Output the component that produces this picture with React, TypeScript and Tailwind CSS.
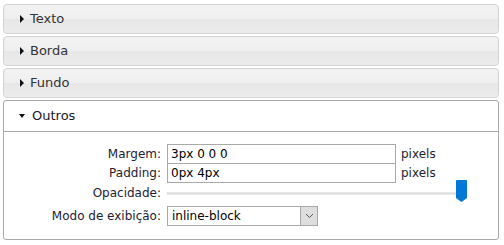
import React from 'react'

const font = { fontFamily: '"DejaVu Sans", Verdana, sans-serif' }

function Closed({ title }: { title: string }) {
  return (
    <div className="h-[30px] rounded-[4px] border border-[#d3d3d3] bg-[linear-gradient(#f2f2f2_0%,#efefef_50%,#e7e7e7_50%,#ececec_100%)] flex items-center pl-[16px] text-[13px] text-[#333]">
      <span className="w-0 h-0 border-y-[4px] border-y-transparent border-l-[4px] border-l-[#111] mr-[6px]"></span>
      {title}
    </div>
  )
}

export default function App() {
  return (
    <div className="w-[504px] h-[245px] bg-white pt-[4px] pl-[3px] pr-[5px]" style={font}>
      <div className="flex flex-col gap-[2px]">
        <Closed title="Texto" />
        <Closed title="Borda" />
        <Closed title="Fundo" />
      </div>

      {/* painel aberto */}
      <div className="mt-[2px] h-[140px] rounded-[3px] border border-[#a9a9a9] bg-white">
        <div className="h-[31px] border-b border-[#a9a9a9] flex items-center pl-[15px] text-[13px] text-[#1a1a2a]">
          <span className="w-0 h-0 border-x-[3.5px] border-x-transparent border-t-[4px] border-t-[#111] mr-[7px]"></span>
          Outros
        </div>

        <div className="pt-[12px] text-[12px] text-[#222230]">
          <div className="flex items-center h-[19px]">
            <span className="w-[163px] text-right pr-[6px]">Margem:</span>
            <div className="w-[229px] h-[20px] border border-[#a9a9a9] px-[3px] leading-[18px] text-black">3px 0 0 0</div>
            <span className="ml-[5px]">pixels</span>
          </div>
          <div className="flex items-center h-[19px]">
            <span className="w-[163px] text-right pr-[6px]">Padding:</span>
            <div className="w-[229px] h-[20px] border border-[#a9a9a9] px-[3px] leading-[18px] text-black">0px 4px</div>
            <span className="ml-[5px]">pixels</span>
          </div>
          <div className="flex items-center h-[22px]">
            <span className="w-[163px] text-right pr-[6px]">Opacidade:</span>
            <div className="relative w-[300px] h-[22px] flex items-center">
              <div className="w-full h-[3px] bg-[#dcdcdc] border-y border-[#e8e8e8]"></div>
              <svg className="absolute left-[289px] top-[-2px]" width="11" height="22" viewBox="0 0 11 22">
                <path d="M1 0 H10 Q11 0 11 1 V18 L5.5 22 L0 18 V1 Q0 0 1 0 Z" fill="#0078d7" />
              </svg>
            </div>
          </div>
          <div className="flex items-center h-[21px] mt-[1px]">
            <span className="w-[163px] text-right pr-[6px]">Modo de exibição:</span>
            <div className="w-[151px] h-[20px] border border-[#a9a9a9] flex items-center text-black">
              <span className="flex-1 pl-[4px]">inline-block</span>
              <div className="w-[17px] h-full bg-[#dedede] border-l border-[#a9a9a9] flex items-center justify-center">
                <svg width="9" height="6" viewBox="0 0 9 6">
                  <path d="M1 1 L4.5 4.5 L8 1" fill="none" stroke="#555" strokeWidth="1" />
                </svg>
              </div>
            </div>
          </div>
        </div>
      </div>
    </div>
  )
}
